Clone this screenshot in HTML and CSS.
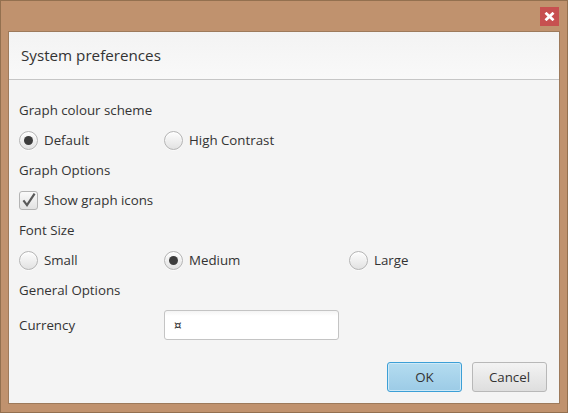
FILE: index.html
```html
<!DOCTYPE html>
<html>
<head>
<meta charset="utf-8">
<link rel="stylesheet" href="styles.css">
</head>
<body>
<div class="frame">
  <div class="titlebar">
    <div class="close" aria-label="Close">
      <svg width="11" height="9" viewBox="0 0 11 9"><path d="M1.5 0.8 L9.5 8.2 M9.5 0.8 L1.5 8.2" stroke="#fff" stroke-width="2.8" stroke-linecap="butt"/></svg>
    </div>
  </div>
  <div class="dialog">
    <div class="header">System preferences</div>
    <div class="body">
      <div class="grid">
        <div class="label row1">Graph colour scheme</div>
        <label class="opt"><span class="radio on"></span>Default</label>
        <label class="opt span2"><span class="radio"></span>High Contrast</label>

        <div class="label row1">Graph Options</div>
        <label class="opt span3"><span class="check"><svg width="16" height="16" viewBox="0 0 16 16"><path d="M2.4 8.4 L6 13.2 L13.6 1.6" fill="none" stroke="#5a5a5a" stroke-width="2.2"/></svg></span>Show graph icons</label>

        <div class="label row1">Font Size</div>
        <label class="opt"><span class="radio"></span>Small</label>
        <label class="opt"><span class="radio on"></span>Medium</label>
        <label class="opt"><span class="radio"></span>Large</label>

        <div class="label row1">General Options</div>
        <div class="label cur">Currency</div>
        <div class="input"><span>¤</span></div>
      </div>
      <div class="buttons">
        <button class="btn ok">OK</button>
        <button class="btn">Cancel</button>
      </div>
    </div>
  </div>
</div>
</body>
</html>
```
FILE: styles.css
```css
* { box-sizing: border-box; }
html, body { margin: 0; padding: 0; }
body {
  width: 568px;
  height: 413px;
  font-family: "Open Sans", "Noto Sans", sans-serif;
  color: #333;
  background: #c0926e;
}
.frame {
  width: 568px;
  height: 413px;
  border: 1px solid #93704f;
  background: #c0926e;
  padding: 0 7px 8px 7px;
  display: flex;
  flex-direction: column;
}
.titlebar {
  height: 30px;
  display: flex;
  justify-content: flex-end;
  align-items: flex-start;
  padding-top: 6px;
  padding-right: 1px;
}
.close {
  width: 19px;
  height: 19px;
  background: #c75050;
  display: flex;
  align-items: center;
  justify-content: center;
}
.dialog {
  flex: 1;
  border: 1px solid #9d7a5b;
  background: #f4f4f4;
  display: flex;
  flex-direction: column;
}
.header {
  height: 48px;
  border-bottom: 1px solid #c6c6c6;
  background: linear-gradient(#f3f3f3, #f9f9f9);
  padding-left: 12px;
  display: flex;
  align-items: center;
  font-size: 15.2px;
  color: #333;
  padding-bottom: 1px;
}
.body {
  flex: 1;
  display: flex;
  flex-direction: column;
  padding: 20px 12px 11px 10px;
}
.grid {
  display: grid;
  grid-template-columns: 135px 175px auto;
  grid-auto-rows: 20px;
  column-gap: 10px;
  row-gap: 10px;
  font-size: 13.3px;
}
.label {
  display: flex;
  align-items: center;
  white-space: nowrap;
}
.row1 { grid-column: 1 / -1; }
.span2 { grid-column: 2 / -1; }
.span3 { grid-column: 1 / -1; }
.opt {
  display: flex;
  align-items: center;
  gap: 6px;
  white-space: nowrap;
}
.radio {
  width: 19px;
  height: 19px;
  border-radius: 50%;
  border: 1px solid #b4b4b4;
  background: linear-gradient(#fdfdfd, #e2e2e2);
  box-shadow: inset 0 1px 1px #ffffff, 0 1px 0 rgba(255,255,255,0.6);
  display: flex;
  align-items: center;
  justify-content: center;
  flex: none;
}
.radio.on::after {
  content: "";
  width: 9px;
  height: 9px;
  border-radius: 50%;
  background: #3c3c3c;
}
.check {
  width: 19px;
  height: 19px;
  border-radius: 3px;
  border: 1px solid #b4b4b4;
  background: linear-gradient(#fafafa, #e2e2e2);
  display: flex;
  align-items: center;
  justify-content: center;
  flex: none;
}
.cur { height: 30px; align-self: start; }
.input {
  height: 30px;
  border: 1px solid #c4c4c4;
  border-radius: 3px;
  background: linear-gradient(#f4f4f4, #ffffff 5px);
  display: flex;
  align-items: center;
  padding-left: 9px;
  font-family: "DejaVu Sans", sans-serif;
  font-size: 12px;
  color: #333;
}
.buttons {
  margin-top: auto;
  display: flex;
  justify-content: flex-end;
  gap: 10px;
}
.btn {
  width: 75px;
  height: 30px;
  border: 1px solid #b8b8b8;
  border-radius: 3px;
  background: linear-gradient(#f3f3f3, #dedede);
  font-family: inherit;
  font-size: 13.3px;
  color: #333;
  padding: 0;
}
.btn.ok {
  border-color: #3c9fd6;
  background: linear-gradient(#b4dcf0, #9ccbe6);
  box-shadow: inset 0 0 0 1px #cfe9f7;
}
```
